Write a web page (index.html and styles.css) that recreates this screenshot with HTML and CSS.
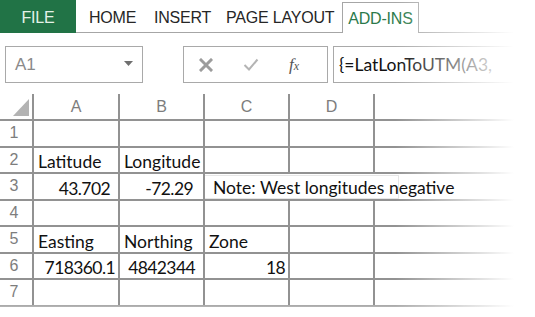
FILE: index.html
```html
<!DOCTYPE html>
<html lang="en">
  <head>
    <meta charset="UTF-8" />
    <meta name="viewport" content="width=device-width, initial-scale=1.0" />
    <title>Excel - LatLonToUTM</title>
    <link rel="stylesheet" href="styles.css">
  </head>
  <body>
    <div class="window">
      <div class="ribbon">
        <div class="tab file">FILE</div>
        <div class="tab home">HOME</div>
        <div class="tab insert">INSERT</div>
        <div class="tab layout">PAGE LAYOUT</div>
        <div class="tab addins">ADD-INS</div>
        <div class="ribbon-rest"></div>
      </div>

      <div class="formula-bar">
        <div class="name-box">
          <span class="name-text">A1</span>
          <svg class="drop" width="9" height="5" viewBox="0 0 9 5"><path d="M0 0h9L4.5 5z" fill="#6f6f6f"/></svg>
        </div>
        <div class="fx-box">
          <svg class="btn-x" width="14" height="14" viewBox="0 0 14 14">
            <path d="M2 2L12 12M12 2L2 12" stroke="#9c9c9c" stroke-width="3" stroke-linecap="square"/>
          </svg>
          <svg class="btn-check" width="16" height="13" viewBox="0 0 16 13">
            <path d="M1.5 7l4.5 4.5L14.5 1.5" stroke="#b4b4b4" stroke-width="2" fill="none"/>
          </svg>
          <span class="fx">f<sub>x</sub></span>
        </div>
        <div class="formula-input">{=LatLonToUTM(A3,</div>
      </div>

      <div class="sheet">
        <div class="corner">
          <svg width="16" height="17" viewBox="0 0 16 17"><path d="M16 0V17H0z" fill="#b3b3b3"/></svg>
        </div>
        <div class="col-head">A</div>
        <div class="col-head">B</div>
        <div class="col-head">C</div>
        <div class="col-head">D</div>
        <div class="col-head last"></div>

        <div class="row-head">1</div>
        <div class="cell"></div><div class="cell"></div><div class="cell"></div><div class="cell"></div><div class="cell last"></div>

        <div class="row-head">2</div>
        <div class="cell">Latitude</div>
        <div class="cell">Longitude</div>
        <div class="cell"></div><div class="cell"></div><div class="cell last"></div>

        <div class="row-head">3</div>
        <div class="cell num pad-a">43.702</div>
        <div class="cell num pad-b">-72.29</div>
        <div class="cell note-cell"><span class="note">Note: West longitudes negative</span></div>
        <div class="cell hidden-line"></div>
        <div class="cell last hidden-line"></div>

        <div class="row-head">4</div>
        <div class="cell"></div><div class="cell"></div><div class="cell"></div><div class="cell"></div><div class="cell last"></div>

        <div class="row-head">5</div>
        <div class="cell">Easting</div>
        <div class="cell">Northing</div>
        <div class="cell">Zone</div>
        <div class="cell"></div><div class="cell last"></div>

        <div class="row-head">6</div>
        <div class="cell num">718360.1</div>
        <div class="cell num pad-a">4842344</div>
        <div class="cell num">18</div>
        <div class="cell"></div><div class="cell last"></div>

        <div class="row-head">7</div>
        <div class="cell"></div><div class="cell"></div><div class="cell"></div><div class="cell"></div><div class="cell last"></div>
      </div>

      <div class="fade-right"></div>
      <div class="fade-bottom"></div>
    </div>
  </body>
</html>
```

FILE: styles.css
```css
* {
  margin: 0;
  padding: 0;
  box-sizing: border-box;
}

body {
  background: #fff;
  font-family: "Liberation Sans", Arial, sans-serif;
  overflow: hidden;
}

.window {
  position: relative;
  width: 535px;
  height: 317px;
  overflow: hidden;
}

/* ribbon tabs */
.ribbon {
  display: flex;
  height: 33px;
  align-items: stretch;
}

.tab {
  font-size: 16px;
  letter-spacing: -0.2px;
  color: #262626;
  display: flex;
  align-items: center;
  padding-top: 3px;
  border-bottom: 1px solid #a6a6a6;
}

.file {
  width: 76px;
  justify-content: center;
  background: #217346;
  color: #e4f2e8;
  border-bottom: none;
}

.home {
  padding-left: 13px;
  width: 78px;
}

.insert {
  width: 72px;
}

.layout {
  width: 116px;
}

.addins {
  width: 77px;
  justify-content: center;
  color: #2b7a4b;
  margin-top: 2px;
  padding-top: 1px;
  border: 1px solid #a6a6a6;
  border-bottom: none;
}

.ribbon-rest {
  flex: 1;
  border-bottom: 1px solid #a6a6a6;
}

/* formula bar */
.formula-bar {
  display: flex;
  height: 50px;
  padding: 13px 0 0 5px;
}

.name-box {
  width: 138px;
  height: 37px;
  border: 1px solid #a9a9a9;
  display: flex;
  align-items: center;
  justify-content: space-between;
  padding: 0 9px 0 9px;
}

.name-text {
  font-size: 17px;
  color: #8a8a8a;
}

.drop {
  margin-top: -2px;
}

.fx-box {
  margin-left: 40px;
  width: 145px;
  height: 37px;
  border: 1px solid #a9a9a9;
  display: flex;
  align-items: center;
  padding-left: 15px;
}

.btn-x {
  margin-right: 30px;
}

.btn-check {
  margin-right: 30px;
}

.fx {
  font-family: "Liberation Serif", serif;
  font-style: italic;
  font-size: 17px;
  color: #555;
}

.fx sub {
  font-size: 12px;
  vertical-align: baseline;
}

.formula-input {
  margin-left: 5px;
  flex: 1;
  height: 37px;
  border: 1px solid #a9a9a9;
  border-right: none;
  display: flex;
  align-items: center;
  padding-left: 5px;
  font-family: Lato, "Open Sans", sans-serif;
  font-size: 17.5px;
  color: #111;
}

/* worksheet grid */
.sheet {
  display: grid;
  grid-template-columns: 34px 86px 85px 85px 85px 1fr;
  grid-template-rows: 27px repeat(7, 26.5px);
  margin-top: 11px;
}

.corner,
.col-head,
.row-head,
.cell {
  border-right: 2px solid #929292;
  border-bottom: 2px solid #929292;
}

.corner {
  display: flex;
  align-items: flex-end;
  justify-content: flex-end;
  padding: 0 3px 3px 0;
}

.col-head,
.row-head {
  font-family: "Liberation Sans", Arial, sans-serif;
  font-size: 16px;
  color: #7d7d7d;
  display: flex;
  align-items: center;
  justify-content: center;
}

.row-head {
  padding-right: 4px;
}

.last {
  border-right: none;
}

.cell {
  font-family: Lato, "Open Sans", sans-serif;
  font-size: 17.5px;
  color: #111;
  display: flex;
  align-items: flex-end;
  padding: 0 3px 0 4px;
  white-space: nowrap;
}

.num {
  justify-content: flex-end;
  padding-right: 3px;
  letter-spacing: -0.6px;
}

.pad-a {
  padding-right: 8px;
}

.pad-b {
  padding-right: 10px;
}

.note-cell {
  overflow: visible;
  border-right: none;
  padding: 1px 0 0 0;
  align-items: stretch;
  position: relative;
  z-index: 1;
}

.note {
  background: #fff;
  display: flex;
  align-items: flex-end;
  padding: 0 0 0 8px;
  width: 194px;
  border: 1px solid #e6e6e6;
  border-left: none;
}

.hidden-line {
  border-right: none;
}

/* edge fades of the cropped screenshot */
.fade-right {
  position: absolute;
  top: 0;
  right: 0;
  width: 140px;
  height: 100%;
  background: linear-gradient(to right, rgba(255, 255, 255, 0), #fff 85%);
  pointer-events: none;
}

.fade-bottom {
  position: absolute;
  left: 0;
  bottom: 0;
  width: 100%;
  height: 12px;
  background: linear-gradient(to bottom, rgba(255, 255, 255, 0.2), #fff);
  pointer-events: none;
}
```
